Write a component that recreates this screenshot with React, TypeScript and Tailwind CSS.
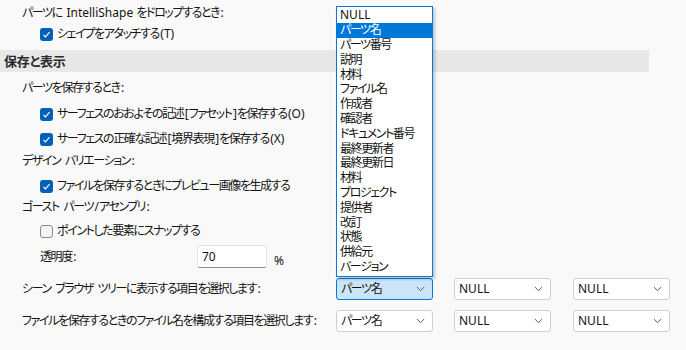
import React from 'react';

const font = "font-['Noto_Sans','Noto_Sans_CJK_JP',sans-serif] [font-feature-settings:'palt']";

const listItems = [
  'NULL',
  'パーツ名',
  'パーツ番号',
  '説明',
  '材料',
  'ファイル名',
  '作成者',
  '確認者',
  'ドキュメント番号',
  '最終更新者',
  '最終更新日',
  '材料',
  'プロジェクト',
  '提供者',
  '改訂',
  '状態',
  '供給元',
  'バージョン',
];

// ascii runs keep normal spacing, japanese runs are tightened
const T = ({ text }: { text: string }) => {
  const parts = text.split(/([\x20-\x7E]+)/);
  return (
    <>
      {parts.map((part, i) =>
        part === '' ? null : /^[\x20-\x7E]+$/.test(part) ? (
          <span key={i} className="whitespace-pre tracking-normal">
            {part}
          </span>
        ) : (
          <span key={i} className={parts[i + 1] ? 'pr-[1.4px]' : ''}>
            {part}
          </span>
        )
      )}
    </>
  );
};

const Check = ({ checked, label, className = '' }: { checked: boolean; label: string; className?: string }) => (
  <div className={`flex h-[20px] items-center pl-[40px] ${className}`}>
    {checked ? (
      <span className="flex h-[13px] w-[13px] items-center justify-center rounded-[3px] bg-[#005fb8]">
        <svg width="9" height="9" viewBox="0 0 9 9">
          <polyline points="1.5,4.8 3.5,6.8 7.5,2.2" fill="none" stroke="#fff" strokeWidth="1.2" />
        </svg>
      </span>
    ) : (
      <span className="h-[13px] w-[13px] rounded-[3px] border border-[#8a8a8a] bg-[#f3f3f3]" />
    )}
    <span className="ml-[4px]">
      <T text={label} />
    </span>
  </div>
);

const Label = ({ text, className = '' }: { text: string; className?: string }) => (
  <div className={`flex h-[20px] items-center pl-[22px] ${className}`}>
    <T text={text} />
  </div>
);

const Chevron = () => (
  <svg width="9" height="6" viewBox="0 0 9 6" className="shrink-0">
    <polyline points="0.8,1 4.5,4.6 8.2,1" fill="none" stroke="#5a5a5a" strokeWidth="1" />
  </svg>
);

const Combo = ({ value, active = false, className = '' }: { value: string; active?: boolean; className?: string }) => (
  <div
    className={`flex h-[22px] w-[97px] items-center justify-between rounded-[3px] border pl-[4px] pr-[7px] ${
      active ? 'border-[#0078d7] bg-[#cce4f7]' : 'border-[#cfcfcf] bg-white'
    } ${className}`}
  >
    <span>
      <T text={value} />
    </span>
    <Chevron />
  </div>
);

export default function App() {
  return (
    <div
      className={`relative h-[350px] w-[686px] overflow-hidden bg-[#f9f9f9] text-[12px] leading-none tracking-[-1.4px] text-[#141414] ${font}`}
    >
      <Label text="パーツに IntelliShape をドロップするとき:" className="mt-[3px]" />
      <Check checked label="シェイプをアタッチする(T)" className="mt-[1px]" />

      <div className="mt-[6px] flex h-[22px] w-[649px] items-center bg-[#e8e8e8] pl-[4px] text-[13px] font-bold tracking-[-0.3px] text-[#2b2b2b]">
        保存と表示
      </div>

      <Label text="パーツを保存するとき:" className="mt-[6px]" />
      <Check checked label="サーフェスのおおよその記述[ファセット]を保存する(O)" className="mt-[6px]" />
      <Check checked label="サーフェスの正確な記述[境界表現]を保存する(X)" className="mt-[5px]" />
      <Label text="デザイン バリエーション:" className="mt-[2px]" />
      <Check checked label="ファイルを保存するときにプレビュー画像を生成する" className="mt-[5px]" />
      <Label text="ゴースト パーツ/アセンブリ:" className="mt-[1px]" />
      <Check checked={false} label="ポイントした要素にスナップする" className="mt-[4px]" />

      <div className="mt-[4px] flex h-[23px] items-center pl-[40px]">
        <span className="w-[157px]">
          <T text="透明度:" />
        </span>
        <div className="flex h-[23px] w-[70px] items-center rounded-[3px] border border-[#e3e3e3] border-b-[#8a8a8a] bg-white pl-[4px] tracking-normal">
          70
        </div>
        <span className="ml-[7px] mt-[8px] tracking-normal">%</span>
      </div>

      <div className="mt-[10px] flex h-[22px] items-center pl-[22px]">
        <span className="w-[314px] whitespace-nowrap">
          <T text="シーン ブラウザ ツリーに表示する項目を選択します:" />
        </span>
        <Combo value="パーツ名" active />
        <Combo value="NULL" className="ml-[21px]" />
        <Combo value="NULL" className="ml-[22px]" />
      </div>

      <div className="mt-[10px] flex h-[22px] items-center pl-[22px]">
        <span className="w-[314px] whitespace-nowrap">
          <T text="ファイルを保存するときのファイル名を構成する項目を選択します:" />
        </span>
        <Combo value="パーツ名" />
        <Combo value="NULL" className="ml-[21px]" />
        <Combo value="NULL" className="ml-[22px]" />
      </div>

      <div className="absolute left-[336px] top-[6px] w-[97px] border border-[#0078d7] bg-white pb-[2px] pt-[1px] shadow-[2px_2px_3px_rgba(0,0,0,0.22)]">
        {listItems.map((item, i) => (
          <div
            key={i}
            className={`flex h-[14.8px] items-center pl-[3px] text-[12px] ${
              i === 1 ? 'bg-[#0078d7] text-white' : 'text-[#111]'
            }`}
          >
            <T text={item} />
          </div>
        ))}
      </div>
    </div>
  );
}
